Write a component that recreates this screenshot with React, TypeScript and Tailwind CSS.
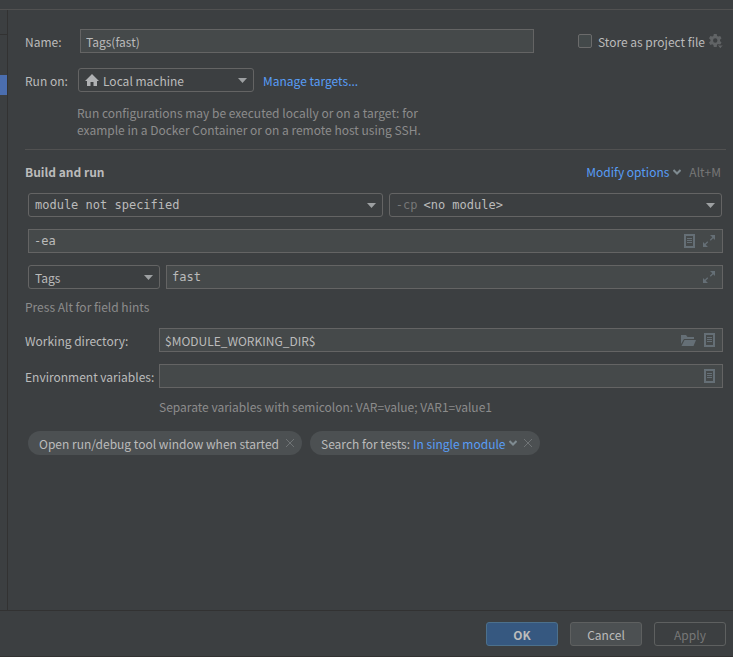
import { useState } from 'react';
import type { ReactNode } from 'react';

const inputClass =
  'min-w-0 flex-1 bg-transparent text-[#bbbbbb] outline-none';

const House = () => (
  <svg width="14" height="12" viewBox="0 0 14 12" fill="#afb1b3" className="mr-1 shrink-0" aria-hidden="true">
    <path d="M7 0L14 7H12V12H8.5V8H5.5V12H2V7H0Z" />
  </svg>
);

const Gear = () => (
  <svg width="14" height="15" viewBox="0 0 14 15" aria-hidden="true">
    <path
      fill="#606365"
      fillRule="evenodd"
      d="M4.8 0h2.9l.4 2 1.1.6 2-.7 1.3 2.4-1.5 1.4v1.4l1.5 1.3-1.4 2.5-2-.7-1 .7-.4 2H4.8l-.4-2-1.1-.6-2 .6L0 8.4l1.5-1.3V5.700L0 4.300l1.300-2.400 2 .7 1.100-.6zM6.250 4.300a2.200 2.200 0 1 0 0 4.400 2.200 2.200 0 0 0 0-4.400z"
    />
    <path fill="#606365" stroke="#3c3f41" strokeWidth="1" d="M8 11h6.500l-3.200 3.800z" />
  </svg>
);

const ListIcon = () => (
  <svg width="11" height="14" viewBox="0 0 11 14" fill="none" aria-hidden="true">
    <path stroke="#656f76" strokeWidth="2" d="M1 1h9v12H1z" />
    <path stroke="#656f76" d="M3 4.500h5M3 6.500h5M3 8.500h5" />
  </svg>
);

const ExpandIcon = () => (
  <svg width="12" height="12" viewBox="0 0 12 12" aria-hidden="true">
    <path fill="#656f76" d="M7 0h5v5l-1.800-1.800-2.500 2.500-.9-.9 2.500-2.500zM5 12H0V7l1.800 1.800 2.500-2.500.9.9-2.500 2.500z" />
  </svg>
);

const FolderIcon = () => (
  <svg width="15" height="11" viewBox="0 0 15 11" fill="#656f76" aria-hidden="true">
    <path d="M0 0h5l1.500 2H13v2H3L0 9z" />
    <path d="M3.500 5H15l-2.500 6H.5z" />
  </svg>
);

const Chevron = () => (
  <svg width="8" height="6" viewBox="0 0 8 6" fill="none" stroke="#7f8b91" strokeWidth="2" aria-hidden="true">
    <path d="M.5 1L4 4.500 7.500 1" />
  </svg>
);

const Cross = () => (
  <svg width="8" height="8" viewBox="0 0 8 8" fill="none" stroke="#6f7375" aria-hidden="true">
    <path d="M0 0l8 8M8 0L0 8" />
  </svg>
);

interface ComboProps {
  label?: string;
  id?: string;
  options: string[];
  prefix?: ReactNode;
  className: string;
}

const Combo = ({ label, id, options, prefix, className }: ComboProps) => (
  <div className={`relative flex h-6 items-center rounded-[3px] border border-[#646464] pl-1.5 ${className}`}>
    {prefix}
    <select
      id={id}
      aria-label={label}
      className="h-full min-w-0 flex-1 appearance-none bg-transparent pr-6 text-[#bbbbbb] outline-none"
    >
      {options.map((option) => (
        <option key={option}>{option}</option>
      ))}
    </select>
    <svg
      width="9"
      height="5"
      viewBox="0 0 9 5"
      className="pointer-events-none absolute top-2 right-1.5 mt-px"
      aria-hidden="true"
    >
      <path fill="#9da0a2" d="M0 0h9L4.500 5z" />
    </svg>
  </div>
);

interface FieldProps {
  id?: string;
  label?: string;
  initial: string;
  className?: string;
  children?: ReactNode;
}

const Field = ({ id, label, initial, className = '', children }: FieldProps) => {
  const [value, setValue] = useState(initial);
  return (
    <div
      className={`flex h-6 min-w-0 flex-1 items-center gap-2 border border-[#646464] bg-[#45494a] pr-[7px] pl-[5px] ${className}`}
    >
      <input
        id={id}
        aria-label={label}
        type="text"
        value={value}
        onChange={(e) => setValue(e.target.value)}
        className={inputClass}
      />
      {children}
    </div>
  );
};

const IconButton = ({ label, children }: { label: string; children: ReactNode }) => (
  <button type="button" aria-label={label} className="flex shrink-0 items-center justify-center">
    {children}
  </button>
);

const Chip = ({ children }: { children: ReactNode }) => (
  <div className="flex h-6 items-center gap-[7px] rounded-full bg-[#4c5052] pr-2 pl-[11px]">
    {children}
    <IconButton label="Remove option">
      <Cross />
    </IconButton>
  </div>
);

const mono = "font-['DejaVu_Sans_Mono',monospace]";

export default function App() {
  const [storeAsFile, setStoreAsFile] = useState(false);

  return (
    <div className="flex min-h-screen flex-col border-b border-[#323232] bg-[#3c3f41] font-['Noto_Sans_CJK_KR',sans-serif] text-[12px] leading-[17px] text-[#bbbbbb]">
      <div className="h-[10px] border-b border-[#515151]" />

      <div className="flex flex-1">
        <aside className="w-2 shrink-0 border-r border-[#323232]">
          <div className="h-[25px] border-b border-[#323232]" />
          <div className="mt-10 h-5 bg-[#4b6eaf]" />
        </aside>

        <main className="min-w-0 flex-1 pt-[19px] pr-[10px] pl-[17px]">
          <div className="flex items-center">
            <label htmlFor="name" className="w-[55px] shrink-0">
              Name:
            </label>
            <Field id="name" initial="Tags(fast)" />
            <label className="ml-11 flex shrink-0 items-center gap-1.5">
              <input
                type="checkbox"
                checked={storeAsFile}
                onChange={(e) => setStoreAsFile(e.target.checked)}
                className="size-3.5 appearance-none rounded-[2px] border border-[#6b6b6b] bg-[#43494a] checked:bg-[#4b6eaf]"
              />
              Store as project file
            </label>
            <div className="ml-1">
              <IconButton label="Storage settings">
                <Gear />
              </IconButton>
            </div>
          </div>

          <div className="mt-[15px] flex items-center">
            <label htmlFor="run-on" className="w-[53px] shrink-0">
              Run on:
            </label>
            <Combo id="run-on" options={['Local machine']} prefix={<House />} className="w-44" />
            <a href="#targets" className="ml-[9px] text-[#589df6]">
              Manage targets...
            </a>
          </div>

          <p className="mt-3 ml-[52px] max-w-[360px] text-[#8c8c8c]">
            Run configurations may be executed locally or on a target: for example in a Docker Container or on a
            remote host using SSH.
          </p>

          <hr className="-mr-[3px] mt-[11px] border-[#515151]" />

          <div className="mt-[13px] mr-[2px] flex items-center">
            <h2 className="flex-1 font-bold">Build and run</h2>
            <button type="button" className="flex items-center gap-1 text-[#589df6]">
              Modify options
              <Chevron />
            </button>
            <span className="ml-2 text-[#777777]">Alt+M</span>
          </div>

          <div className={`mt-[13px] mr-px ml-[3px] flex gap-1.5 ${mono}`}>
            <Combo label="Module" options={['module not specified']} className="min-w-0 flex-[355]" />
            <Combo
              label="Classpath"
              options={['<no module>']}
              prefix={<span className="mr-[6px] text-[#777777]">-cp</span>}
              className="min-w-0 flex-[333]"
            />
          </div>

          <div className={`mt-3 ml-[3px] flex ${mono}`}>
            <Field label="VM options" initial="-ea">
              <IconButton label="Insert macros">
                <ListIcon />
              </IconButton>
              <IconButton label="Expand">
                <ExpandIcon />
              </IconButton>
            </Field>
          </div>

          <div className="mt-3 ml-[3px] flex gap-1.5">
            <Combo label="Test kind" options={['Tags']} className="w-[132px]" />
            <Field label="Tag expression" initial="fast" className={mono}>
              <IconButton label="Expand">
                <ExpandIcon />
              </IconButton>
            </Field>
          </div>

          <p className="mt-[9px] text-[#8c8c8c]">Press Alt for field hints</p>

          <div className="mt-[13px] flex items-center">
            <label htmlFor="working-dir" className="w-[134px] shrink-0">
              Working directory:
            </label>
            <Field id="working-dir" initial="$MODULE_WORKING_DIR$">
              <IconButton label="Browse">
                <FolderIcon />
              </IconButton>
              <IconButton label="Insert macros">
                <ListIcon />
              </IconButton>
            </Field>
          </div>

          <div className="mt-3 flex items-center">
            <label htmlFor="env" className="w-[134px] shrink-0">
              Environment variables:
            </label>
            <Field id="env" initial="">
              <IconButton label="Edit variables">
                <ListIcon />
              </IconButton>
            </Field>
          </div>
          <p className="mt-[10px] ml-[134px] text-[#8c8c8c]">
            Separate variables with semicolon: VAR=value; VAR1=value1
          </p>

          <div className="mt-4 ml-[3px] flex flex-wrap gap-2">
            <Chip>Open run/debug tool window when started</Chip>
            <Chip>
              <span className="flex items-center gap-[3px]">
                Search for tests:
                <button type="button" className="flex items-center gap-[3px] text-[#589df6]">
                  In single module
                  <Chevron />
                </button>
              </span>
            </Chip>
          </div>
        </main>
      </div>

      <footer className="flex justify-end gap-3 border-t border-[#323232] pt-[11px] pr-[7px] pb-[10px]">
        <button type="button" className="h-6 w-[72px] rounded-[3px] border border-[#4c708c] bg-[#365880] font-bold">
          OK
        </button>
        <button type="button" className="h-6 w-[72px] rounded-[3px] border border-[#5e6060] bg-[#4c5052]">
          Cancel
        </button>
        <button type="button" disabled className="h-6 w-[72px] rounded-[3px] border border-[#5e6060] text-[#777777]">
          Apply
        </button>
      </footer>
    </div>
  );
}
